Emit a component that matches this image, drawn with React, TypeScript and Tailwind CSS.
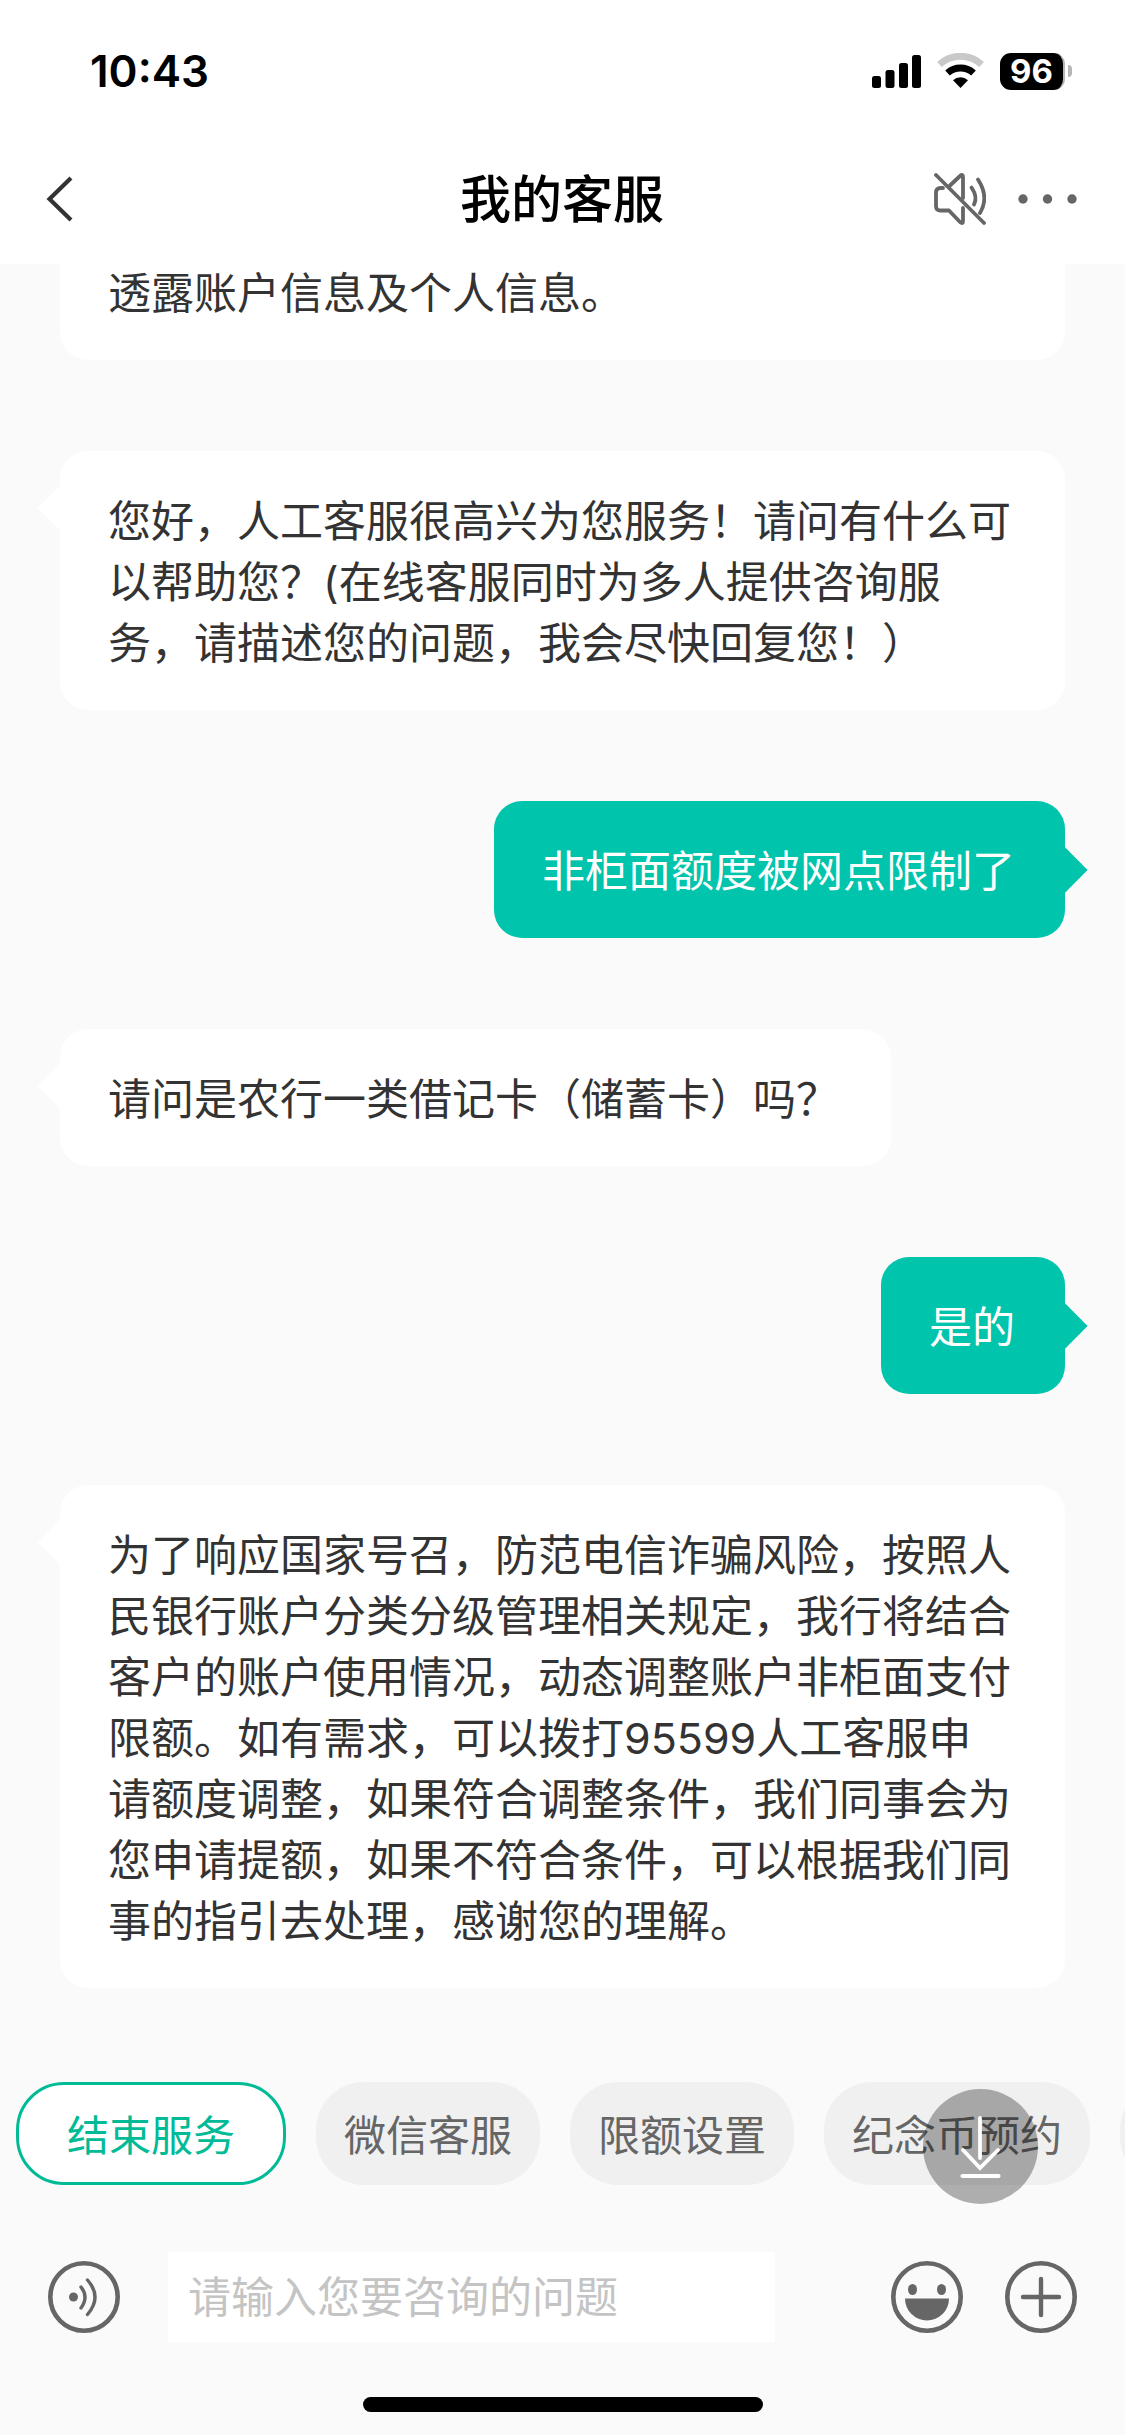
import type { ReactNode } from "react"
import { clsx } from "clsx"

type Message = {
  from: "agent" | "user"
  text: string
}

const messages: Message[] = [
  {
    from: "agent",
    text: "您好，人工客服很高兴为您服务！请问有什么可以帮助您？(在线客服同时为多人提供咨询服务，请描述您的问题，我会尽快回复您！）",
  },
  { from: "user", text: "非柜面额度被网点限制了" },
  { from: "agent", text: "请问是农行一类借记卡（储蓄卡）吗？" },
  { from: "user", text: "是的" },
  {
    from: "agent",
    text: "为了响应国家号召，防范电信诈骗风险，按照人民银行账户分类分级管理相关规定，我行将结合客户的账户使用情况，动态调整账户非柜面支付限额。如有需求，可以拨打95599人工客服申请额度调整，如果符合调整条件，我们同事会为您申请提额，如果不符合条件，可以根据我们同事的指引去处理，感谢您的理解。",
  },
]

const shortcuts = ["微信客服", "限额设置", "纪念币预约"]

function StatusBar() {
  return (
    <div className="flex h-[142px] items-center justify-between pr-[53px] pl-[90px]">
      <time className="text-[44px] font-semibold text-black">10:43</time>
      <div className="flex items-center gap-4">
        <svg width="49" height="36" viewBox="0 0 49 36" aria-hidden="true">
          <rect x="0" y="23" width="9" height="12" rx="2.5" />
          <rect x="13.5" y="17" width="9" height="18" rx="2.5" />
          <rect x="27" y="10" width="9" height="25" rx="2.5" />
          <rect x="40" y="2" width="9" height="33" rx="2.5" />
        </svg>
        <svg width="47" height="36" viewBox="0 0 47 36" fill="none" aria-hidden="true">
          <path d="M2.5 11.5a31 31 0 0 1 42 0" stroke="#c9c9c9" strokeWidth="7" />
          <path d="M10.5 20a19.5 19.5 0 0 1 26 0" stroke="#000" strokeWidth="7" />
          <path d="M23.5 35L16 27.3a11 11 0 0 1 15 0z" fill="#000" />
        </svg>
        <div className="flex items-center gap-[3px]">
          <div className="flex h-[37px] w-[65px] items-center justify-center rounded-[11px] border-r-2 border-[#b5b5b5] bg-black text-[33px] font-bold text-white">
            96
          </div>
          <div className="h-3 w-1 rounded-r-full bg-[#b5b5b5]" />
        </div>
      </div>
    </div>
  )
}

function Header() {
  return (
    <header className="relative z-10 bg-white pb-2">
      <StatusBar />
      <div className="grid h-[114px] grid-cols-[1fr_auto_1fr] items-center pr-[47px] pl-[46px]">
        <button type="button" aria-label="返回" className="justify-self-start">
          <svg width="27" height="46" viewBox="0 0 27 46" fill="none" stroke="#333" strokeWidth="4.2">
            <path d="M25 2L3.5 23 25 44" />
          </svg>
        </button>
        <h1 className="text-[51px] font-medium text-black">我的客服</h1>
        <div className="flex items-center gap-8 justify-self-end">
          <button type="button" aria-label="静音">
            <svg
              width="52"
              height="52"
              viewBox="0 0 52 52"
              fill="none"
              stroke="#666"
              strokeWidth="3.8"
              strokeLinecap="round"
              strokeLinejoin="round"
            >
              <path d="M2 2l48 48" />
              <path d="M16 12.5L26 3q3-2.5 3 1v21" />
              <path d="M9 15H6.5Q2 15 2 19.5V33q0 4.5 4.5 4.5H15L26 49q3 2.5 3-1V35" />
              <path d="M37.5 14.5q6.5 9.5 2.5 17" />
              <path d="M44 6.5q11.5 17.5 2 33.5" />
            </svg>
          </button>
          <button type="button" aria-label="更多">
            <svg width="60" height="12" viewBox="0 0 60 12" fill="#666">
              <circle cx="5" cy="6" r="4.7" />
              <circle cx="29.5" cy="6" r="4.7" />
              <circle cx="54" cy="6" r="4.7" />
            </svg>
          </button>
        </div>
      </div>
    </header>
  )
}

function Bubble({ from, text }: Message) {
  const mine = from === "user"

  return (
    <div
      className={clsx(
        "relative max-w-full rounded-[28px] pt-10 pb-9 pl-12",
        mine ? "self-end bg-[#00c4ac] pr-[50px] text-white" : "self-start bg-white pr-[52px]"
      )}
    >
      <span
        aria-hidden="true"
        className={clsx(
          "absolute size-8 rotate-45",
          mine ? "top-[53px] -right-4 bg-[#00c4ac]" : "top-[41px] -left-4 bg-white"
        )}
      />
      <p className="relative">{text}</p>
    </div>
  )
}

function RoundButton({ label, children }: { label: string; children: ReactNode }) {
  return (
    <button type="button" aria-label={label} className="shrink-0">
      <svg width="72" height="72" viewBox="0 0 72 72" fill="none" stroke="#666" strokeLinecap="round">
        <circle cx="36" cy="36" r="33.7" strokeWidth="4.6" />
        {children}
      </svg>
    </button>
  )
}

export default function App() {
  return (
    <div
      lang="zh-CN"
      className="flex min-h-screen flex-col overflow-hidden bg-[#fafafa] font-['Inter','Noto_Sans_CJK_SC',sans-serif] text-[43px] leading-[61px] text-[#333]"
    >
      <Header />

      <main className="-mt-px flex flex-1 flex-col gap-[91px] px-[60px]">
        <p className="rounded-b-[28px] bg-white px-12 pb-9">透露账户信息及个人信息。</p>
        {messages.map((message) => (
          <Bubble key={message.text} {...message} />
        ))}
      </main>

      <footer className="pt-[94px]">
        <div className="relative">
          <div className="flex gap-[30px] overflow-hidden pl-4 text-[42px] whitespace-nowrap">
            <button
              type="button"
              className="h-[103px] shrink-0 rounded-[48px] border-3 border-[#00bb96] bg-white px-12 pt-1 text-[#00bb96]"
            >
              结束服务
            </button>
            {shortcuts.map((name) => (
              <button
                key={name}
                type="button"
                className="h-[103px] shrink-0 rounded-[48px] bg-[#f0f0f0] px-7 pt-1 text-[#666]"
              >
                {name}
              </button>
            ))}
            <button
              type="button"
              aria-label="更多服务"
              className="h-[103px] w-56 shrink-0 rounded-[48px] bg-[#f0f0f0]"
            />
          </div>
          <button
            type="button"
            aria-label="回到底部"
            className="absolute top-[7px] right-[87px] flex size-[115px] items-center justify-center rounded-full bg-black/30"
          >
            <svg width="42" height="66" viewBox="0 0 42 66" fill="none" stroke="#fff" strokeWidth="3.8" strokeLinecap="round">
              <path d="M20 4v40" />
              <path d="M3 36l17 18 18-18" />
              <path d="M2.5 62h36" strokeWidth="4.2" />
            </svg>
          </button>
        </div>

        <form className="mt-[67px] flex items-center px-12" onSubmit={(e) => e.preventDefault()}>
          <RoundButton label="语音输入">
            <circle cx="25.5" cy="36" r="4.5" fill="#666" stroke="none" />
            <path d="M33 26q8 10 0 21" strokeWidth="3.4" />
            <path d="M39.5 19q15 17 0 34.5" strokeWidth="3.4" />
          </RoundButton>
          <input
            type="text"
            aria-label="咨询问题"
            placeholder="请输入您要咨询的问题"
            className="mr-[116px] ml-12 h-[90px] min-w-0 flex-1 bg-white px-5 placeholder:text-[#c4c4c4] focus:outline-none"
          />
          <div className="flex gap-[42px]">
            <RoundButton label="表情">
              <ellipse cx="21.5" cy="28.5" rx="4.5" ry="5.5" fill="#666" stroke="none" />
              <ellipse cx="50.5" cy="28.5" rx="4.5" ry="5.5" fill="#666" stroke="none" />
              <path d="M14 37.5h44a22 22 0 0 1-44 0z" fill="#666" stroke="none" />
            </RoundButton>
            <RoundButton label="更多功能">
              <path d="M36 18v36M18 36h36" strokeWidth="4.4" />
            </RoundButton>
          </div>
        </form>

        <div className="mx-auto mt-[55px] mb-[23px] h-[15px] w-[400px] rounded-full bg-black" />
      </footer>
    </div>
  )
}
